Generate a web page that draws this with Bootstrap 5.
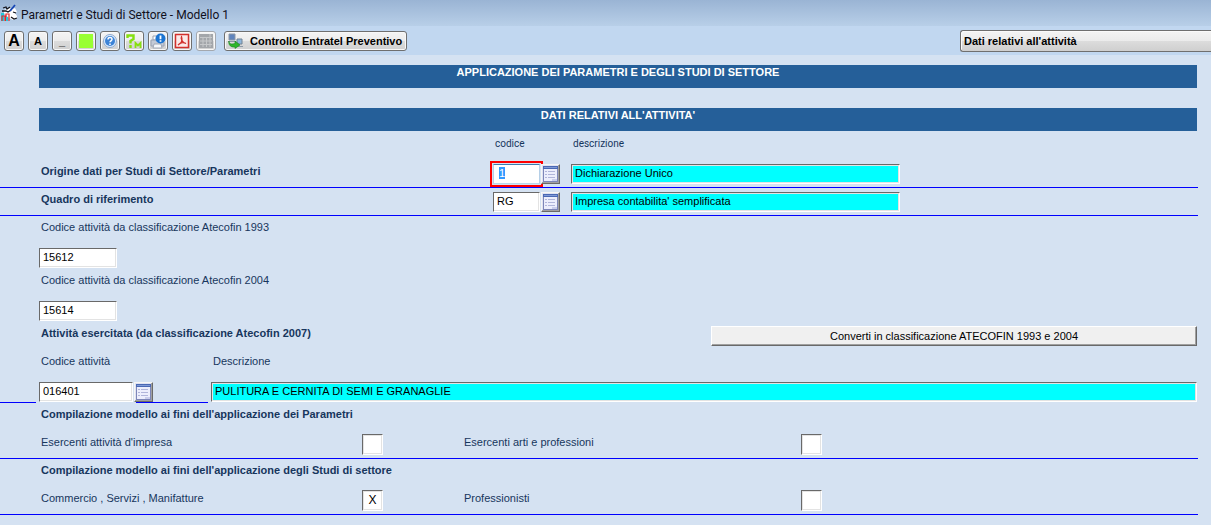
<!DOCTYPE html>
<html lang="it">
<head>
<meta charset="utf-8">
<meta name="viewport" content="width=device-width, initial-scale=1">
<title>Parametri e Studi di Settore - Modello 1</title>
<link href="https://cdn.jsdelivr.net/npm/bootstrap@5.3.0/dist/css/bootstrap.min.css" rel="stylesheet">
<style>
  body { background: #d5e2f2; color: #17365d; font: 11px/16px "Liberation Sans", Arial, sans-serif; }
  button, input, select { font: inherit; color: #000; }

  /* Window chrome */
  .title-bar { height: 26px; padding: 4px 0 0 1px; background: linear-gradient(#9ab4d4, #b8cfe8); color: #10101c; font: 12px/22px Roboto, "Noto Sans", sans-serif; }
  .title-bar h1 { font: inherit; margin-left: 3px; }
  .tool-bar { height: 29px; padding-left: 4px; background: #c1d7f0; }
  .tool { height: 20px; padding: 0; border: 1px solid #6f6f6f; border-radius: 3px; background: linear-gradient(#f4f4f4, #ececec 50%, #dcdcdc 51%, #d0d0d0); box-shadow: inset 0 0 0 1px #f8f8f8; color: #000; font-weight: 700; line-height: 16px; }
  .tool-icon { width: 20px; }
  .tool-icon svg { display: block; margin: 1px; }
  .tool-big { font-size: 16px; }
  .tool-main { padding: 0 4px 0 2px; }
  .tool-main svg { margin-right: 6px; }
  .tool:disabled { border-color: #a4a8ae; }
  .section-pick { width: 251px; height: 22px; padding: 0 3px; border: 1px solid #6f6f6f; border-right: 0; border-radius: 3px 0 0 3px; background: linear-gradient(#f4f4f4, #ebebeb 50%, #dcdcdc 51%, #cfcfcf); box-shadow: inset 1px 1px 0 #fafafa; appearance: none; font-weight: 700; }

  /* Form sheet */
  .sheet { padding-top: 10px; margin-right: 13px; }
  .inset { margin-left: 39px; margin-right: 1px; }
  .band { height: 23px; margin-bottom: 20px; background: #255f99; color: #fff; font-size: 11px; line-height: 15px; font-weight: 700; text-align: center; }
  .band:nth-of-type(2) { margin-bottom: 0; }
  .line-row { height: 28px; padding: 3px 1px 0 39px; }
  .ruled { border-bottom: 1px solid #00f; }
  .cap { padding-left: 2px; }
  .lookup-grid { display: grid; grid-template-columns: 454fr 78px 329fr 297fr; align-items: start; }
  .check-grid { display: grid; grid-template-columns: 323fr 102fr 337fr 396fr; align-items: start; }
  .split-grid { display: grid; grid-template-columns: 672fr 486fr; align-items: start; height: 28px; }
  .col-heads { height: 29px; padding-top: 5px; font-family: Roboto, "Liberation Sans", sans-serif; font-size: 10px; }
  .field { height: 20px; padding: 0 3px 2px; border: 1px solid; border-color: #696969 #fff #fff #696969; border-radius: 0; background: #fff; box-shadow: inset -1px -1px #e3e3e3; outline: 0; }
  .field-found { background: #0ff; box-shadow: inset 0 0 0 1px #e3e3e3; }
  .drop-1 { margin-top: 1px; }
  .years { padding-top: 3px; }
  .field-year { display: block; width: 78px; margin: 13px 0 4px; }
  .field-code { width: 47px; margin-right: 1px; }
  .field-code:focus { outline: 2px solid #f00; outline-offset: 1px; border-color: #3d7bad #b5cfe7 #b7d9ed #b5cfe7; box-shadow: none; padding-left: 5px; }
  ::selection { background: #3399ff; color: #fff; }
  .lookup { position: relative; width: 19px; height: 20px; padding: 0; border: 1px solid; border-color: #f6f6f6 #696969 #696969 #f6f6f6; background: #dfe3f2; box-shadow: inset -1px -1px #a0a0a0; }
  .lookup svg { display: block; }
  .convert { height: 20px; padding: 0; border: 1px solid; border-color: #fff #696969 #696969 #fff; background: #f0f0f0; box-shadow: inset -1px -1px #a0a0a0; }
  .tick { display: block; width: 21px; height: 21px; margin: 0; appearance: none; border: 1px solid; border-color: #696969 #fff #fff #696969; background: #fff; box-shadow: inset 0 0 0 1px #e3e3e3; text-align: center; font-size: 12px; line-height: 18px; }
  .tick:checked::before { content: "X"; }
  .activity-heads { display: grid; grid-template-columns: 172px 1fr; height: 29px; }
  .seg-start { width: 36px; margin-right: 3px; }
  .seg-mid { width: 72px; margin-right: 3px; }
  .seg-mid .lookup { margin-left: -2px; }
  .activity { height: 21px; padding-right: 1px; }
  .activity .field-number { width: 94px; margin-right: 3px; }
</style>
</head>
<body>
<svg class="d-none" xmlns="http://www.w3.org/2000/svg">
  <symbol id="list" viewBox="0 0 17 18">
    <path fill="#7d86b8" d="M1 1h15v16H1z"/><path fill="#4a68b4" d="M1 1h15v3H1z"/><path fill="#7f9ad6" d="M2 2h13v1H2z"/><path fill="#eceefc" d="M2 4h13v12H2z"/>
    <path fill="#b0b5da" d="M3 6h2v1H3zm3 0h7v1H6zM3 9h2v1H3zm3 0h7v1H6zM3 12h2v1H3zm3 0h7v1H6z"/><path fill="#c9cdec" d="M10 14h5v2h-5z"/>
  </symbol>
</svg>

<header>
  <div class="title-bar d-flex">
    <svg width="17" height="18" viewBox="0 0 17 18" aria-hidden="true">
      <path fill="#fff" d="M3 6l5-2 3 1 3-1 2 4-2 1 2 3v2l-4 2-4-2-5-5z"/>
      <path d="M2 4l3-1 1 2 3-2M1 7h4l2 1 3-2M10 13l3 2 3-1M12 8l3 1" fill="none" stroke="#15151c" stroke-width="1.300"/>
      <path d="M9 7l5-6" stroke="#1646b4" stroke-width="1.800"/>
      <path d="M0 9h3v8H0z" fill="#22c8dc"/><path d="M1 17v-5h3v5m1 0v-7h3v7" fill="none" stroke="#e22c2c" stroke-width="1.200"/><path d="M5 13h2v4H5z" fill="#22c8dc"/>
    </svg>
    <h1 class="mb-0">Parametri e Studi di Settore - Modello 1</h1>
  </div>
  <div class="tool-bar d-flex align-items-center justify-content-between">
    <div class="d-flex gap-1">
      <button class="tool tool-icon tool-big" type="button" title="Carattere grande">A</button>
      <button class="tool tool-icon" type="button" title="Carattere piccolo">A</button>
      <button class="tool tool-icon" type="button" title="Riduci">_</button>
      <button class="tool tool-icon" type="button" title="Colore"><svg width="16" height="16" viewBox="0 0 16 16"><path fill="#9f3" d="M1 1h14v14H1z"/></svg></button>
      <button class="tool tool-icon" type="button" title="Aiuto"><svg width="16" height="16" viewBox="0 0 16 16"><circle cx="8" cy="8" r="6.500" fill="#dcecff" stroke="#8fa9cc"/><circle cx="8" cy="8" r="5" fill="#3d83d6"/><path d="M6 6.500c0-2.600 4-2.600 4-.2C10 7.800 8 7.800 8 9.300M8 10.500v1.500" fill="none" stroke="#fff" stroke-width="1.500"/></svg></button>
      <button class="tool tool-icon" type="button" title="Aiuto modello"><svg width="16" height="16" viewBox="0 0 16 16"><path d="M1.500 5V2.500h6V6L4.500 8v2.500M4.500 12v3" fill="none" stroke="#86e010" stroke-width="2.400"/><path d="M9.500 15v-5l2.500 2.500 2.500-2.500v5" fill="none" stroke="#86e010" stroke-width="1.800"/></svg></button>
      <button class="tool tool-icon" type="button" title="Stampa"><svg width="16" height="16" viewBox="0 0 16 16"><path d="M3 3h5v4H3z" fill="#fff" stroke="#9aa2b0"/><path d="M1 7h11l2 2v4H1z" fill="#c3cad6" stroke="#9aa2b2"/><path d="M4 11h7l1 4H3z" fill="#f6f8fb" stroke="#a2a9b6"/><circle cx="10.500" cy="5.500" r="5" fill="#1c75d2"/><path d="M10.500 2.500v3.800M10.500 7.300v1.500" stroke="#fff" stroke-width="1.800"/></svg></button>
      <button class="tool tool-icon" type="button" title="PDF"><svg width="16" height="16" viewBox="0 0 16 16"><path d="M1.500 1.500h13v13h-13z" fill="#fbe9e8" stroke="#d2302c" stroke-width="1.500"/><path d="M4 12c3-1 5-5 3.500-8.500C6.500 5 8 10 12 10.500 9 9 6 10 4 12z" fill="none" stroke="#d2302c" stroke-width="1.200"/></svg></button>
      <button class="tool tool-icon" type="button" title="Calcolatrice" disabled><svg width="16" height="16" viewBox="0 0 16 16"><path fill="#a3a6aa" d="M1 1h14v14H1z"/><path d="M2 4.500h12M2 8h12M2 11.500h12M5 4v10M8.500 4v10M12 1v13" stroke="#c6c8ca"/></svg></button>
      <button class="tool tool-main d-flex align-items-center ms-1" type="button"><svg width="17" height="16" viewBox="0 0 17 16"><path d="M2 1h6v6H2z" fill="#5f84bd" stroke="#8b97a8"/><path d="M1 8h8v1H1z" fill="#8b95a5"/><path d="M10 6h5v5h-5z" fill="#8fb7dc" stroke="#718294"/><path d="M9 13h7v1H9z" fill="#8c98a5"/><path d="M2 8c0 3 2 3.500 6 2.500V8l5 4-5 3.500V14C4 14.500 1 12 2 8z" fill="#2fb52c" stroke="#16861b" stroke-width=".6"/></svg><span>Controllo Entratel Preventivo</span></button>
    </div>
    <select class="section-pick" aria-label="Sezione"><option>Dati relativi all'attività</option></select>
  </div>
</header>

<main>
<form class="sheet">
  <h2 class="band inset">APPLICAZIONE DEI PARAMETRI E DEGLI STUDI DI SETTORE</h2>
  <h2 class="band inset">DATI RELATIVI ALL'ATTIVITA'</h2>

  <div class="lookup-grid inset col-heads">
    <span></span><span class="cap">codice</span><span class="cap">descrizione</span>
  </div>
  <div class="line-row ruled lookup-grid">
    <label class="cap fw-bold" for="origine">Origine dati per Studi di Settore/Parametri</label>
    <div class="d-flex drop-1"><input class="field field-code" id="origine" value="1" autofocus><button class="lookup flex-shrink-0" type="button" aria-label="Elenco origine dati"><svg width="17" height="18"><use href="#list"/></svg></button></div>
    <input class="field field-found drop-1 w-100" value="Dichiarazione Unico" aria-label="Descrizione origine" readonly>
  </div>
  <div class="line-row ruled lookup-grid">
    <label class="cap fw-bold" for="quadro">Quadro di riferimento</label>
    <div class="d-flex drop-1"><input class="field field-code" id="quadro" value="RG"><button class="lookup flex-shrink-0" type="button" aria-label="Elenco quadri"><svg width="17" height="18"><use href="#list"/></svg></button></div>
    <input class="field field-found drop-1 w-100" value="Impresa contabilita' semplificata" aria-label="Descrizione quadro" readonly>
  </div>

  <div class="inset years">
    <label class="cap d-block" for="ateco93">Codice attività da classificazione Atecofin 1993</label>
    <input class="field field-year" id="ateco93" value="15612">
    <label class="cap d-block" for="ateco04">Codice attività da classificazione Atecofin 2004</label>
    <input class="field field-year" id="ateco04" value="15614">
    <div class="split-grid">
      <span class="cap fw-bold">Attività esercitata (da classificazione Atecofin 2007)</span>
      <button class="convert drop-1" type="button">Converti in classificazione ATECOFIN 1993 e 2004</button>
    </div>
    <div class="activity-heads">
      <label class="cap" for="attivita">Codice attività</label>
      <label class="cap" for="attivita-desc">Descrizione</label>
    </div>
  </div>
  <div class="activity d-flex">
    <span class="seg-start ruled"></span>
    <input class="field field-number" id="attivita" value="016401">
    <div class="seg-mid ruled"><button class="lookup d-block" type="button" aria-label="Elenco attività"><svg width="17" height="18"><use href="#list"/></svg></button></div>
    <input class="field field-found flex-fill" id="attivita-desc" value="PULITURA E CERNITA DI SEMI E GRANAGLIE" readonly>
  </div>

  <div class="line-row"><span class="cap fw-bold">Compilazione modello ai fini dell'applicazione dei Parametri</span></div>
  <div class="line-row ruled check-grid">
    <label class="cap" for="impresa">Esercenti attività d'impresa</label><input class="tick" type="checkbox" id="impresa">
    <label for="arti">Esercenti arti e professioni</label><input class="tick" type="checkbox" id="arti">
  </div>
  <div class="line-row"><span class="cap fw-bold">Compilazione modello ai fini dell'applicazione degli Studi di settore</span></div>
  <div class="line-row ruled check-grid">
    <label class="cap" for="commercio">Commercio , Servizi , Manifatture</label><input class="tick" type="checkbox" id="commercio" checked>
    <label for="profess">Professionisti</label><input class="tick" type="checkbox" id="profess">
  </div>
</form>
</main>
<script src="https://cdn.jsdelivr.net/npm/bootstrap@5.3.0/dist/js/bootstrap.bundle.min.js"></script>
<script>
  document.getElementById('origine').focus();
  document.getElementById('origine').select();
</script>
</body>
</html>
